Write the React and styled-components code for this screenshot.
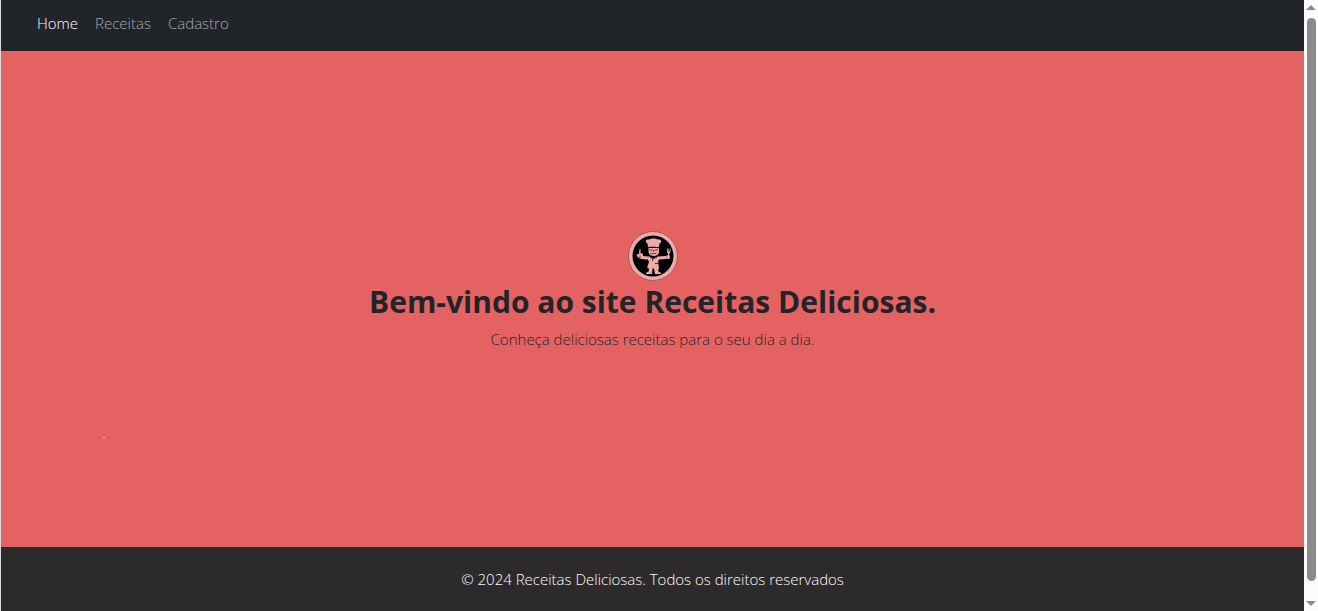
import React from "react";
import styled, { createGlobalStyle } from "styled-components";

const GlobalStyle = createGlobalStyle`
  *, *::before, *::after { box-sizing: border-box; }
  html { background: #212529; }
  body {
    margin: 0;
    color: #212529;
    font-family: "Open Sans", "Noto Sans", sans-serif;
    font-size: 15px;
    font-weight: 300;
    line-height: 24px;
  }
`;

const Window = styled.div`
  display: flex;
  min-height: 100vh;
  background: #fcfcfc;
  border-left: 1px solid #dcdcdc;
`;

const Page = styled.div`
  flex: 1;
  min-width: 0;
  display: flex;
  flex-direction: column;
`;

const Navbar = styled.nav`
  display: flex;
  gap: 17px;
  padding: 11px 36px 16px;
  background: #212529;
`;

const NavLink = styled.a`
  color: ${({ $active }) => ($active ? "#ffffff" : "#a6a8a9")};
  text-decoration: none;
`;

const Hero = styled.main`
  position: relative;
  flex: 1;
  display: flex;
  flex-direction: column;
  align-items: center;
  justify-content: center;
  text-align: center;
  background: #e56262;
`;

const Logo = styled.svg`
  display: block;
  width: 50px;
  height: 50px;
`;

const Title = styled.h1`
  margin: 0 0 4px;
  font-size: 30px;
  font-weight: 700;
  line-height: 42px;
`;

const Lead = styled.p`
  margin: 0 0 16px;
`;

const Speck = styled.span`
  position: absolute;
  left: 102px;
  bottom: 109px;
  width: 2px;
  height: 1px;
  background: #ffffff;
`;

const Footer = styled.footer`
  padding: 20px;
  text-align: center;
  color: #ffffff;
  background: #2c2a2a;
`;

const Scrollbar = styled.div`
  flex: none;
  width: 14px;
  display: flex;
  flex-direction: column;
  align-items: center;
  padding: 5px 0;
`;

const Arrow = styled.svg`
  display: block;
  width: 10px;
  height: 5px;
  fill: #8b8b8b;
`;

const Thumb = styled.div`
  flex: 1;
  width: 9px;
  margin: 8px 0 20px;
  border-radius: 5px;
  background: #8b8b8b;
`;

function ChefLogo() {
  return (
    <Logo viewBox="0 0 50 50" role="img" aria-label="Receitas Deliciosas">
      <circle cx="25" cy="25" r="24.5" fill="#efaaaa" stroke="#a05858" />
      <circle cx="25" cy="25" r="20.5" fill="#000000" />
      <g fill="#efaaaa">
        <path d="M20 16 19.5 12.5C16.5 11 17.500 8 21 8.500C23 7 28 7 30 8.500C33.500 8 34.500 11 31.500 12.500L31 16Z" />
        <path d="M20.500 17H31V20.500C31 24 28 25 25.500 25C22.500 25 20.500 23 20.500 20Z" />
        <path d="M14 25 21 25.500 25 27.500 30 25.500 38 25 38.500 28 31 28.500 30 31 31 37 30 40 33 42V43H27L26 37.500H24.500L24 43H18V42L21 40 20.500 37 19 36.500 21 31 20 28.500 13 28Z" />
        <path d="M11.500 18H12.500V22L15 23 15 26.500 13 28 9.500 26 8.500 23.500 11 23Z" />
        <path d="M39 17.500H39.800V20.500H40.500V17.500H41.200V20.500H41.800V17.500H42.500V21L41.200 23V28H40V23L39 21Z" />
        <circle cx="40" cy="26" r="2" />
      </g>
      <g fill="none" stroke="#2c1515" strokeWidth="0.8">
        <path d="M20 16.500Q25 15 31 17M21.500 19H24.500M26.500 19H30M22.500 22Q25 24 28.500 22M22 26 25 28 29 26M24.500 28V30M27 32.500H30" />
        <path d="M25.500 19V21M12 24.500V27" />
      </g>
    </Logo>
  );
}

export default function App() {
  return (
    <>
      <GlobalStyle />
      <Window>
        <Page>
          <Navbar>
            <NavLink href="#home" $active aria-current="page">Home</NavLink>
            <NavLink href="#receitas">Receitas</NavLink>
            <NavLink href="#cadastro">Cadastro</NavLink>
          </Navbar>
          <Hero>
            <ChefLogo />
            <Title>Bem-vindo ao site Receitas Deliciosas.</Title>
            <Lead>Conheça deliciosas receitas para o seu dia a dia.</Lead>
            <Speck />
          </Hero>
          <Footer>© 2024 Receitas Deliciosas. Todos os direitos reservados</Footer>
        </Page>
        <Scrollbar aria-hidden="true">
          <Arrow viewBox="0 0 10 5"><path d="M5 0 10 5H0Z" /></Arrow>
          <Thumb />
          <Arrow viewBox="0 0 10 5"><path d="M0 0H10L5 5Z" /></Arrow>
        </Scrollbar>
      </Window>
    </>
  );
}
